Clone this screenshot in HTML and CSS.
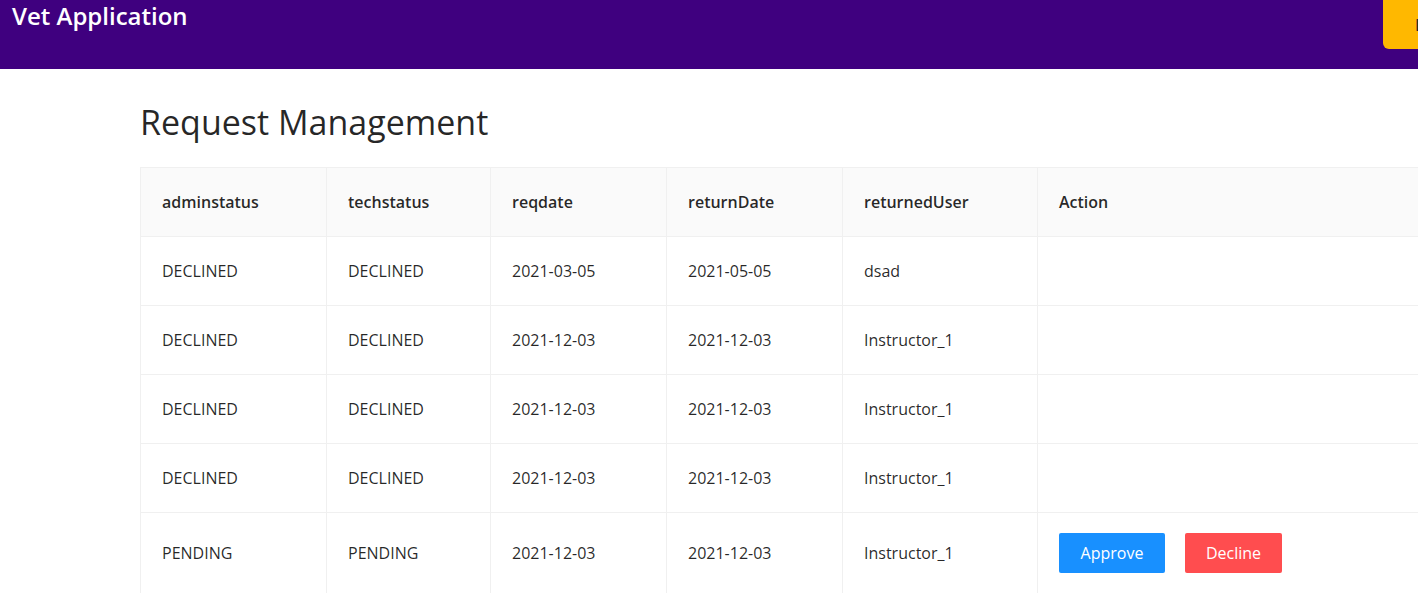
FILE: index.html
```html
<!DOCTYPE html>
<html>
<head>
<meta charset="utf-8">
<link rel="stylesheet" href="styles.css">
</head>
<body>
<header class="topbar">
  <div class="brand">Vet Application</div>
  <button class="logout">Logout</button>
</header>
<main class="content">
  <h1 class="title">Request Management</h1>
  <table class="grid">
    <colgroup>
      <col class="c1"><col class="c2"><col class="c3"><col class="c4"><col class="c5"><col class="c6">
    </colgroup>
    <thead>
      <tr><th>adminstatus</th><th>techstatus</th><th>reqdate</th><th>returnDate</th><th>returnedUser</th><th>Action</th></tr>
    </thead>
    <tbody>
      <tr><td>DECLINED</td><td>DECLINED</td><td>2021-03-05</td><td>2021-05-05</td><td>dsad</td><td></td></tr>
      <tr><td>DECLINED</td><td>DECLINED</td><td>2021-12-03</td><td>2021-12-03</td><td>Instructor_1</td><td></td></tr>
      <tr><td>DECLINED</td><td>DECLINED</td><td>2021-12-03</td><td>2021-12-03</td><td>Instructor_1</td><td></td></tr>
      <tr><td>DECLINED</td><td>DECLINED</td><td>2021-12-03</td><td>2021-12-03</td><td>Instructor_1</td><td></td></tr>
      <tr class="tall"><td>PENDING</td><td>PENDING</td><td>2021-12-03</td><td>2021-12-03</td><td>Instructor_1</td>
        <td><div class="actions"><button class="btn approve">Approve</button><button class="btn decline">Decline</button></div></td></tr>
    </tbody>
  </table>
</main>
</body>
</html>
```
FILE: styles.css
```css
html, body { margin: 0; padding: 0; overflow: hidden; }
body { font-family: "Open Sans", "Noto Sans", sans-serif; color: rgba(0,0,0,0.85); background: #fff; width: 1418px; }
.topbar { height: 69px; background: #3f007f; display: flex; justify-content: space-between; align-items: flex-start; position: relative; overflow: hidden; }
.brand { color: #fff; font-weight: 600; font-size: 24px; line-height: 32px; padding-left: 12px; }
.logout { position: absolute; left: 1383px; top: 0; height: 49px; width: 120px; background: #ffb800; border: none; border-radius: 0 0 0 6px; font: inherit; font-size: 16px; text-align: left; padding-left: 32px; color: #222; }
.content { padding: 32px 0 0 140px; }
.title { margin: 0; font-size: 34px; font-weight: 500; line-height: 43px; }
.grid { margin-top: 23px; border-collapse: collapse; table-layout: fixed; width: 1400px; font-size: 16px; }
.c1 { width: 186px; } .c2 { width: 164px; } .c3 { width: 176px; } .c4 { width: 176px; } .c5 { width: 195px; } .c6 { width: 503px; }
.grid th, .grid td { text-align: left; padding: 0 21px; height: 68px; border: 1px solid #f0f0f0; }
.grid th { background: #fafafa; font-weight: 600; height: 68px; }
.grid tr.tall td { height: 80px; }
.actions { display: flex; gap: 20px; }
.btn { height: 40px; border: none; border-radius: 2px; color: #fff; font: inherit; font-size: 16px; padding: 0 15px; }
.approve { background: #1890ff; width: 106px; }
.decline { background: #ff4d4f; width: 97px; }
```
